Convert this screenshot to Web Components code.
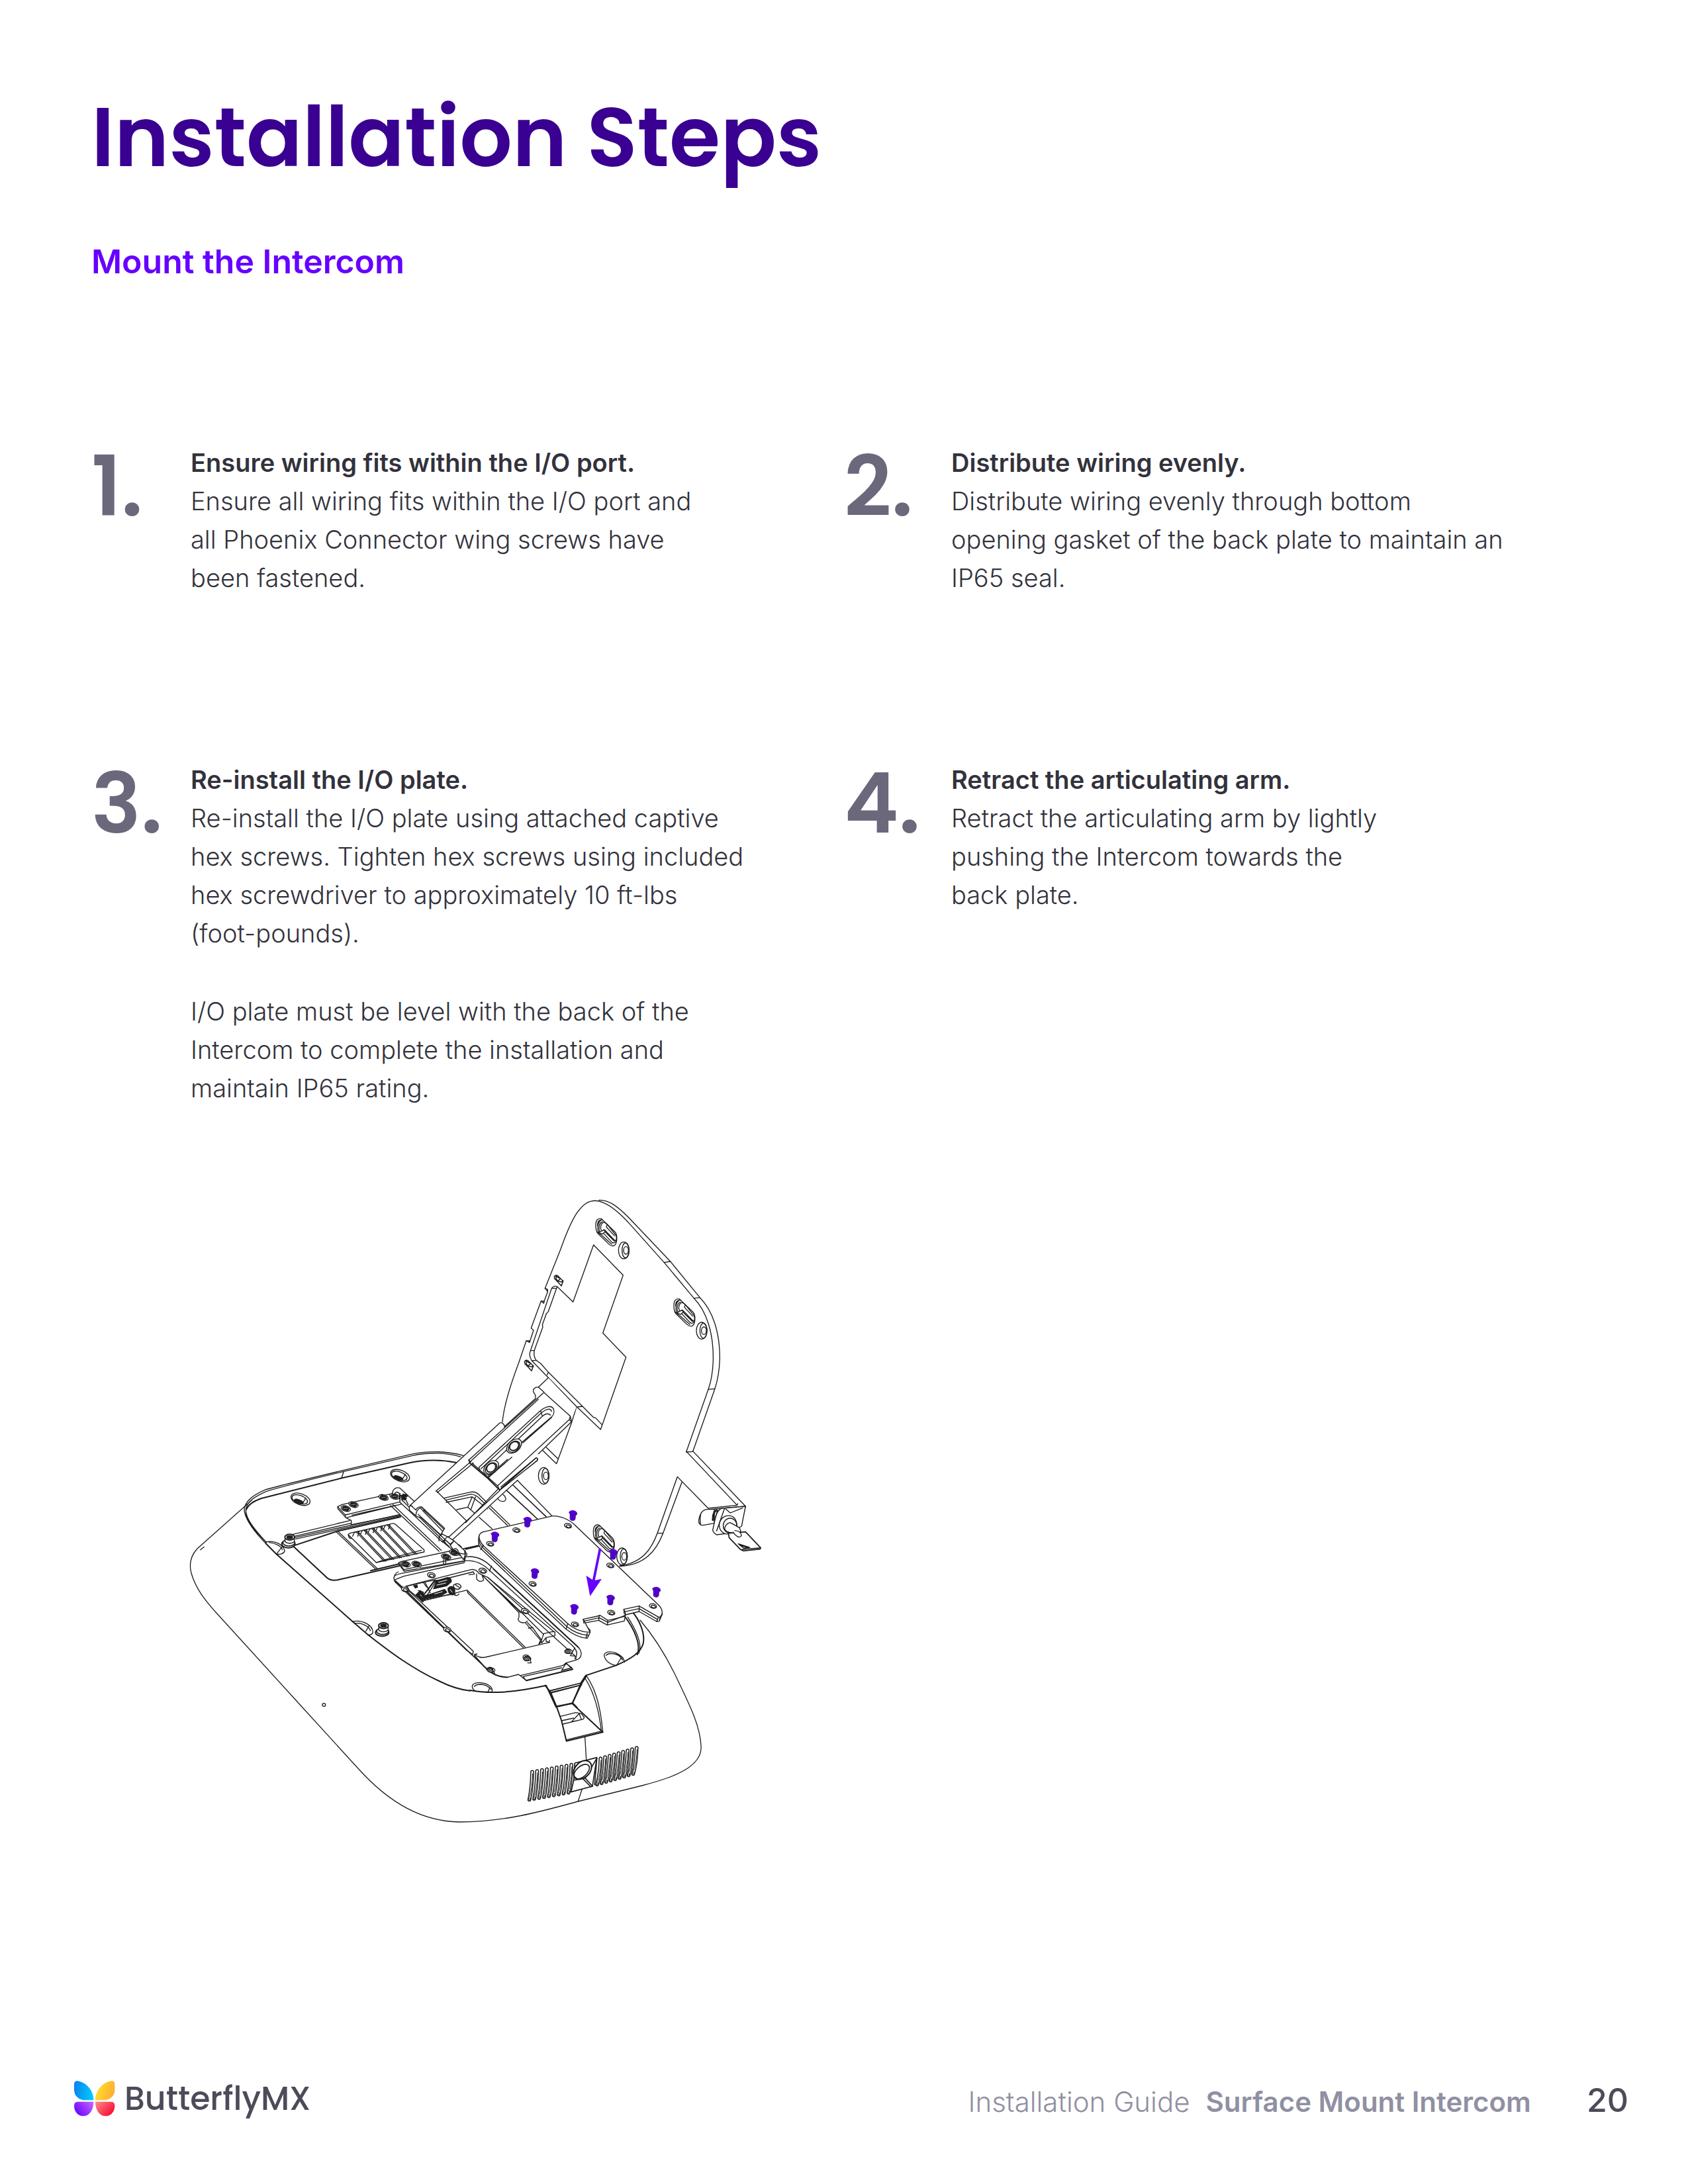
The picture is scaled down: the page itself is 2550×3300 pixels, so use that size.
<!DOCTYPE html>
<html lang="en">
<head>
<meta charset="utf-8">
<title>Installation Steps</title>
<style>
  body { margin: 0; background: #fff; font-family: Poppins, Inter, "Liberation Sans", sans-serif; color: #32323c; }
</style>
</head>
<body>
<guide-page>
  <page-title>
    <span slot="title">Installation Steps</span>
    <span slot="section">Mount the Intercom</span>
  </page-title>
  <step-grid>
    <guide-step number="1.">
      <span slot="heading">Ensure wiring fits within the I/O port.</span>
      <p>Ensure all wiring fits within the I/O port and<br>all Phoenix Connector wing screws have<br>been fastened.</p>
    </guide-step>
    <guide-step number="2." class="wide">
      <span slot="heading">Distribute wiring evenly.</span>
      <p>Distribute wiring evenly through bottom<br>opening gasket of the back plate to maintain an<br>IP65 seal.</p>
    </guide-step>
    <guide-step number="3.">
      <span slot="heading">Re-install the I/O plate.</span>
      <p>Re-install the I/O plate using attached captive<br>hex screws. Tighten hex screws using included<br>hex screwdriver to approximately 10 ft-lbs<br>(foot-pounds).</p>
      <p>I/O plate must be level with the back of the<br>Intercom to complete the installation and<br>maintain IP65 rating.</p>
    </guide-step>
    <guide-step number="4." class="wide">
      <span slot="heading">Retract the articulating arm.</span>
      <p>Retract the articulating arm by lightly<br>pushing the Intercom towards the<br>back plate.</p>
    </guide-step>
  </step-grid>
  <intercom-drawing></intercom-drawing>
  <page-footer slot="footer" page="20">
    <span slot="guide">Installation Guide</span>
    <span slot="product">Surface Mount Intercom</span>
  </page-footer>
</guide-page>

<script>
class Base extends HTMLElement {
  constructor() {
    super();
    this.attachShadow({ mode: "open" }).innerHTML = this.render();
  }
}

customElements.define("guide-page", class extends Base {
  render() {
    return `<style>
      :host { display: flex; flex-direction: column; min-height: 100vh; box-sizing: border-box; padding: 133px 0 92px; }
      main { padding: 0 138px; }
    </style>
    <main><slot></slot></main>
    <slot name="footer"></slot>`;
  }
});

customElements.define("page-title", class extends Base {
  render() {
    return `<style>
      :host { display: block; }
      h1 { margin: 0; font-weight: 600; font-size: 125px; line-height: 150px; color: #390091; }
      h2 { margin: 78px 0 0; font-family: Inter, sans-serif; font-weight: 600; font-size: 50px; line-height: 68px; color: #6600ff; }
    </style>
    <h1><slot name="title"></slot></h1>
    <h2><slot name="section"></slot></h2>`;
  }
});

customElements.define("step-grid", class extends Base {
  render() {
    return `<style>
      :host { display: grid; grid-template-columns: 1fr 1fr; row-gap: 247px; margin-top: 241px; }
    </style><slot></slot>`;
  }
});

customElements.define("guide-step", class extends HTMLElement {
  connectedCallback() {
    if (this.shadowRoot) return;
    this.attachShadow({ mode: "open" }).innerHTML = `<style>
      :host { display: flex; --number-width: 150px; }
      :host(.wide) { --number-width: 162px; }
      .number { flex: 0 0 var(--number-width); font-size: 125px; line-height: 132px; font-weight: 600; color: #6b687c; }
      .text { font-family: Inter, sans-serif; font-size: 38px; line-height: 58px; font-weight: 300; }
      h3 { margin: 0; font: inherit; font-weight: 600; }
      ::slotted(p) { margin: 0 0 60px; }
      ::slotted(p:last-child) { margin-bottom: 0; }
    </style>
    <div class="number">${this.getAttribute("number")}</div>
    <div class="text"><h3><slot name="heading"></slot></h3><slot></slot></div>`;
  }
});

customElements.define("page-footer", class extends HTMLElement {
  connectedCallback() {
    if (this.shadowRoot) return;
    this.attachShadow({ mode: "open" }).innerHTML = `<style>
      :host { display: flex; align-items: flex-start; justify-content: space-between; margin-top: auto; padding: 0 90px 0 112px; line-height: 64px; }
      .right { display: flex; align-items: baseline; font-family: Inter, sans-serif; font-size: 42px; color: #9090a2; }
      .guide { font-weight: 300; margin-right: 24px; }
      .product { font-weight: 600; margin-right: 84px; }
      .page { font-size: 50px; font-weight: 500; color: #4b4b5a; }
    </style>
    <brand-logo></brand-logo>
    <div class="right">
      <span class="guide"><slot name="guide"></slot></span>
      <span class="product"><slot name="product"></slot></span>
      <span class="page">${this.getAttribute("page")}</span>
    </div>`;
  }
});

customElements.define("brand-logo", class extends Base {
  render() {
    return `<style>
      :host { display: flex; align-items: center; gap: 14px; font-size: 49px; line-height: 60px; font-weight: 500; color: #4b4b5a; }
      svg { display: block; width: 62px; height: 54px; }
    </style>
    <svg viewBox="96 137 186 162" aria-hidden="true">
      <defs>
        <linearGradient id="b" x1="0" y1="0.4" x2="1" y2="0.6"><stop offset="0" stop-color="#0a84f0"/><stop offset="1" stop-color="#00ccff"/></linearGradient>
        <linearGradient id="y" x1="0" y1="0.4" x2="1" y2="0.7"><stop offset="0" stop-color="#ffe02c"/><stop offset="1" stop-color="#ffaa30"/></linearGradient>
        <linearGradient id="p" x1="0" y1="0.8" x2="1" y2="0.2"><stop offset="0" stop-color="#6600ff"/><stop offset="1" stop-color="#c060ff"/></linearGradient>
        <linearGradient id="r" x1="0" y1="0.1" x2="1" y2="0.8"><stop offset="0" stop-color="#ff8585"/><stop offset="1" stop-color="#f5052f"/></linearGradient>
      </defs>
      <path fill="url(#b)" d="M96 152Q96 137 112 138C150 144 184 180 184 225H148C118 225 96 206 96 178Z"/>
      <path fill="url(#y)" d="M280 152Q280 137 264 138C226 144 192 180 192 225H228C258 225 280 206 280 178Z"/>
      <path fill="url(#p)" d="M184 232H112Q96 232 96 250C96 278 114 297 138 297C166 297 184 268 184 232Z"/>
      <path fill="url(#r)" d="M192 232H264Q280 232 280 250C280 278 262 297 238 297C210 297 192 268 192 232Z"/>
    </svg>
    <span>ButterflyMX</span>`;
  }
});

/* Line drawing of the intercom on its articulating arm. Each group has its own local scale. */
customElements.define("intercom-drawing", class extends Base {
  render() {
    const at = (points, draw) => points.map(p => draw(...p)).join("");
    const hole = (x, y, r = 16) => `<g transform="translate(${x} ${y}) rotate(15)"><ellipse rx="${r}" ry="${r * .62}" fill="#fff"/><ellipse cx="2" cy="2" rx="${r * .6}" ry="${r * .34}"/></g>`;
    const darkScrew = (x, y) => `<g transform="translate(${x} ${y}) rotate(18)"><ellipse rx="22" ry="12" fill="#fff"/><ellipse rx="15" ry="8" fill="#222"/><path d="M-8 3L8-3" stroke="#aaa" stroke-width="2"/></g>`;
    const bolt = (x, y) => `<g transform="translate(${x} ${y})"><ellipse cx="6" cy="-1" rx="17" ry="10" fill="#fff"/><circle r="10" cx="4" cy="-3"/><ellipse cx="4" cy="-3" rx="5" ry="4"/></g>`;
    const well = (x, y) => `<g transform="translate(${x} ${y}) rotate(20)"><ellipse rx="45" ry="25"/><ellipse cx="-3" cy="2" rx="37" ry="18"/><ellipse cx="-4" cy="13" rx="21" ry="8" fill="#222"/><path d="M20-14L16 12"/></g>`;
    const thumb = (x, y) => `<g transform="translate(${x} ${y})"><ellipse cx="-3" cy="12" rx="30" ry="17" fill="#fff" stroke-width="6"/><ellipse cx="-1" cy="6" rx="27" ry="15" fill="#fff" stroke-width="5"/><path d="M-18-18V2Q2 16 24 2V-18" fill="#fff"/><ellipse cx="3" cy="-19" rx="22" ry="13" fill="#fff" stroke-width="6"/><ellipse cx="3" cy="-19" rx="13" ry="7" fill="#222"/></g>`;
    const slot = (x, y) => `<g transform="translate(${x} ${y})"><path fill="#fff" d="M540 215C540 190 550 181 566 185L628 245C640 262 637 300 622 307C610 310 602 304 592 292L550 252C542 243 540 230 540 215Z"/><path d="M548 216C548 196 556 188 570 190M545 243L570 262L612 300M552 246C546 225 550 200 562 193M558 245C551 225 556 203 570 198M566 240C558 225 562 206 578 200L592 210M553 247L578 234L582 244L570 254ZM566 240L580 235L628 285C635 282 636 268 630 258L592 210L588 222L625 262M582 244L624 286M575 250L612 290C620 298 632 293 634 282"/></g>`;
    const disc = (x, y) => `<g transform="translate(${x} ${y})"><ellipse rx="24" ry="38" fill="#fff"/><ellipse cx="8" cy="0" rx="16" ry="34"/><ellipse cx="10" cy="0" rx="11" ry="17"/></g>`;
    const clip = (x, y) => `<path transform="translate(${x} ${y})" d="M-20-18Q-14-28-4-22L20 2L12 24L-6 4L-18-8ZM-12-22V-8L-4 2L8-10M-4 2L14 6L20 0M-12-20L2-12" stroke-width="4.5"/>`;
    const roller = (x, y) => `<g transform="translate(${x} ${y}) rotate(-42)"><ellipse rx="39" ry="26" fill="#fff"/><ellipse cx="-2" cy="2" rx="30" ry="21"/><ellipse rx="23" ry="18" stroke-width="6"/></g>`;
    const screw = (x, y) => `<g transform="translate(${x} ${y})"><path fill="#5200cc" stroke="#3c0099" stroke-width="2" d="M-12-2V24Q-8 30 2 30Q10 29 11 22L13 0Z"/><path fill="#5a00e0" stroke="#3c0099" stroke-width="2" d="M-16-8Q-12-17 2-16Q14-14 18-6V3Q8 9-3 5Q-14 2-16-8Z"/><path stroke="#3c0099" stroke-width="2" d="M-14-6Q0 4 17-2"/></g>`;
    const rib = (x, y, dx, h) => {
      const d = `M${x} ${y}Q${x - 2} ${y + h * .6} ${x - dx} ${y + h}`;
      return `<path d="${d}" stroke-width="17"/><path d="${d}" stroke="#fff" stroke-width="8"/><path d="M${x + 2} ${y + 8}Q${x - 1} ${y + h * .6} ${x - dx + 2} ${y + h - 14}" stroke-width="3"/><ellipse cx="${x - dx}" cy="${y + h - 4}" rx="4" ry="6" stroke-width="3"/>`;
    };
    let ribs = "";
    for (let i = 0; i < 9; i++) {
      ribs += rib(372 + 22.2 * i, 712 - 4 * i, 13, 126);
      ribs += rib(682 + 20.4 * i, 651 - 6 * i, 16, 118);
    }
    let slats = "";
    for (let i = 0; i < 5; i++) {
      const x = 804 + 35 * i, y = 464 - 8 * i;
      slats += `M${x} ${y}l127 134M${x + 8} ${y}l127 133M${x - 16} ${y + 20}l8-18l22-4l-7 22`;
    }

    return `<style>
      :host { display: block; margin: 127px 0 0 142px; }
      svg { display: block; width: 880px; height: 960px; max-width: 100%; }
    </style>
    <svg viewBox="280 1800 880 960" role="img" aria-label="Intercom with captive hex screws and I/O plate" fill="none" stroke="#1c1c1c" stroke-width="1.3" stroke-linejoin="round" stroke-linecap="round">
      <!-- housing outline -->
      <path d="M380 2267L298 2340C287 2352 286 2366 289 2377C296 2402 312 2420 325 2435L457 2580L540 2671C590 2727 640 2752 694 2753C760 2753 815 2738 873 2722L970 2698C1000 2690 1022 2683 1040 2671C1055 2660 1060 2650 1059 2637C1057 2605 1040 2573 1023 2537C1008 2505 990 2475 967 2448"/>

      <!-- left side of the housing: rim, battery cover, vent -->
      <g transform="translate(270 2160) scale(.33333)" stroke-width="4">
        <path d="M395 517C330 450 300 400 297 365C298 325 335 297 395 272C450 256 600 220 745 185L1050 113C1130 95 1220 98 1290 118M398 512C340 450 305 405 304 365C306 330 340 305 398 280C470 258 600 226 745 191L1060 118C1130 102 1220 104 1278 124M748 190L738 220M98 545L115 532M306 362C298 385 315 430 398 512"/>
        <path stroke-width="6" d="M306 362C318 335 345 322 375 312L740 220L1040 152C1120 135 1200 138 1258 150M395 517L445 567L790 872L860 932C960 1010 1060 1085 1180 1140C1230 1165 1280 1180 1320 1184"/>
        <circle cx="658" cy="1248" r="7"/>
        ${at([[1003, 209], [552, 316]], well)}
        <path d="M395 510C430 500 475 520 480 550C478 562 460 567 445 565M410 512C440 515 465 530 470 545M468 532L445 562M790 870C830 862 880 885 880 920C875 930 865 932 858 930M800 878C835 875 865 895 868 912M862 890L848 915"/>
        <path d="M505 478L775 413M520 485L780 425M524 490L1000 386M530 496L1005 391M715 465L895 635M722 462L902 632M960 345L1180 552M970 340L1190 548M1010 330L1225 530M1020 326L1235 525"/>
        <path stroke-width="6" d="M520 527L715 462L1005 396M522 532L672 672C685 684 700 685 720 682L1000 618"/>
        <path d="M768 476L895 603L1112 555V545L985 432Q972 420 955 430L775 470ZM895 603L935 590L1100 547M768 476Q770 494 782 494"/>
        <path d="${slats}"/>
        <path fill="#fff" d="M720 350L740 340L970 290L1015 325L755 387Z"/>
        <path d="M720 350L722 360L758 400L782 412V430M755 387V398M758 400L1010 338M785 388L985 343M1000 388L780 432"/>
        ${at([[757, 358], [792, 340], [928, 308], [978, 303]], darkScrew)}
        <path fill="#fff" d="M968 290C970 265 990 260 1003 266L1230 475L1195 510L1003 330L1000 290Q985 275 975 295Z"/>
        <path d="M1003 290V320M1010 318L1210 515M1020 300L1040 340M1050 365Q1050 345 1075 340M1078 390Q1070 360 1095 352"/>
        <path d="M1008 300L1030 296M1010 308L1034 302M1012 316L1030 312M1018 294L1024 318" stroke-width="8"/>
        ${at([[500, 507], [925, 908]], thumb)}
      </g>

      <!-- wall plate -->
      <g transform="translate(720 1780) scale(.33333)" stroke-width="4">
        <path d="M117 1105C125 1020 160 920 190 840L225 738L240 745L258 690L247 680L292 558L303 567L322 515L310 500L380 325C410 240 440 170 470 139C500 100 540 95 575 112C620 130 660 170 700 215L850 383L985 545C1040 600 1075 700 1072 830C1070 880 1062 925 1050 958L950 1242"/>
        <path d="M555 100C600 98 640 130 690 180L878 378L1012 542C1070 600 1103 700 1102 820C1100 880 1090 925 1080 955L980 1240M850 383L878 378M985 545L1012 542M1050 958L1080 955M950 1242L980 1240"/>
        <path d="M225 738L240 738V745M292 558L305 558V567M310 500L322 505V515"/>
        <path d="M365 492L437 562L530 303L664 440L572 703L677 812L562 1140L455 1038L250 828C238 810 238 795 245 780L340 500Q350 486 365 492L325 605L316 615L298 665L300 675L262 780C258 800 262 815 270 826L290 840L325 880L480 1035L530 1085L540 1088L568 1118M455 1038L480 1035M245 782H262M250 828L270 826M342 500H360M325 880L320 892"/>
        <path d="M452 1040L430 1110L362 1295L300 1235M315 1220L368 1272"/>
        ${at([[372, 465], [237, 850]], clip)}
        ${at([[0, 0], [354, 364], [-11, 1388]], slot)}
        ${at([[667, 328], [1020, 692], [659, 1715], [304, 1350]], disc)}
        <path fill="#fff" stroke="none" d="M325 905L280 948L265 998L305 972L430 1090L452 1040Z"/>
        <path d="M325 905L280 948C265 945 253 958 258 970C262 980 272 985 265 998M280 948L305 970"/>
      </g>

      <!-- wall plate tail and key lock -->
      <g transform="translate(640 2180) scale(.34439 .33333)" stroke-width="4">
        <path d="M1153 40L1375 283L1248 297L1113 154L1025 410C1000 480 960 545 860 557M1180 37L1412 288L1388 380M1133 178L1050 410C1020 490 970 555 860 560M1025 410L1050 410M1375 283L1378 276M1248 303L1412 288"/>
        <path fill="#fff" d="M1248 302C1225 300 1212 320 1207 350C1205 365 1212 375 1225 374L1275 365V302ZM1216 322Q1210 345 1215 370"/>
        <path stroke-width="8" d="M1285 305Q1265 320 1270 350M1275 312L1268 350M1290 310L1278 350"/>
        <path fill="#fff" d="M1310 297Q1290 300 1280 340L1268 395Q1268 405 1285 417L1340 410L1395 378L1400 350L1412 288Z"/>
        <path d="M1320 297L1285 400M1325 300L1345 318L1400 295"/>
        <ellipse cx="1335" cy="372" rx="38" ry="42" fill="#fff" transform="rotate(15 1335 372)"/>
        <ellipse cx="1344" cy="376" rx="30" ry="34"/>
        <path fill="#fff" d="M1345 362L1385 385Q1396 410 1390 425L1350 408Q1325 405 1320 390Q1325 365 1345 362Z"/>
        <path fill="#fff" stroke-width="5" d="M1337 410L1412 404L1478 476L1476 482L1402 490L1390 484L1340 430Z"/>
        <path d="M1395 484L1478 476M1380 458L1430 475L1405 478ZM1385 462L1418 474" stroke-width="4.5"/>
        <path fill="#fff" d="M1365 398Q1390 400 1394 418Q1392 430 1378 426Q1362 415 1358 405"/>
      </g>

      <!-- I/O pocket -->
      <g transform="translate(560 2300) scale(.33333)" stroke-width="4">
        <path stroke-width="6" d="M430 122L490 108M0 220L127 190"/>
        <path d="M125 225C103 235 100 262 115 275L435 580L515 655C550 690 580 703 620 703L670 690L705 718L915 667L885 638L930 625C957 618 962 590 940 565L545 200C510 165 470 152 430 157L425 178M112 260L150 245L425 183M105 250Q108 238 140 232L430 175C470 172 510 190 540 220L915 560C935 580 940 600 925 618M548 198L538 222M545 200L940 565M555 212L945 572"/>
        <path stroke-width="6" d="M110 265L165 315L435 580M470 605L515 655C550 690 580 703 620 703M705 718L915 667"/>
        <path d="M160 290L455 215Q478 212 490 232M165 300L465 225L470 235L445 238M480 235V252A18 16 0 0 0 512 262L505 240M490 232L530 250L835 500M505 240L600 335L672 410V430A20 15 0 0 0 710 448M600 335Q650 380 680 410M510 245L700 425L785 510M710 455L735 480L775 535M700 455L770 535L762 552M785 510L780 530L765 552M715 480L735 478"/>
        <path fill="#fff" d="M785 505L820 497H835V515L795 523L775 548Q770 540 785 505ZM795 523V540L810 545V535"/>
        <path d="M160 290Q162 310 180 318L465 585L462 600L435 580M240 355L437 308L700 567M440 320L692 569M437 308L440 320M165 300L240 360M470 600C490 612 500 616 520 612L810 545M470 600L482 597"/>
        <path d="M680 695L870 650L885 638M705 718L690 700L865 660M865 672L885 640L912 660L865 672"/>
        <path d="M530 250L925 605M905 605L930 608V625M925 570L905 605"/>
        <path fill="#fff" d="M165 290L260 268L295 262L225 350L175 310ZM240 275L250 290L262 300M215 310L240 318"/>
        <path fill="#222" d="M300 265L350 250Q368 255 365 270L345 288L285 302ZM275 325L335 305L345 318L320 332L240 350L235 335ZM350 300Q365 285 378 298Q388 315 370 330Q350 325 350 300ZM195 288L210 285L212 295L202 298ZM225 310L240 325L235 362L205 330Z"/>
        <path stroke="#fff" stroke-width="3" d="M308 272L345 262M300 285L340 276M290 325L325 315M360 305L370 318M225 330L235 340"/>
        <path d="M300 262L240 355M290 262L228 345M240 355L340 332L385 325M375 285Q400 270 410 292Q400 310 385 302Q375 298 375 285M385 285L402 296M370 325Q390 340 400 325M245 270L270 320"/>
        ${at([[275, 240, 18], [508, 220, 18], [155, 305, 16], [347, 487, 17], [700, 403, 18]], hole)}
        ${at([[890, 587], [703, 620], [540, 672]], bolt)}
        <path d="M690 615Q690 600 705 602Q722 605 722 620L727 638H712M525 670Q530 655 545 658L562 685"/>
        <path fill="#fff" d="M127 183L140 178L410 120L430 135L425 158L150 215Z"/>
        <path d="M127 183V190L152 222L425 175V158M150 215V222M225 205L228 215M330 170V188M340 165V186"/>
        ${at([[158, 190], [208, 190], [342, 157], [378, 138], [415, 142]], darkScrew)}
        <path fill="#fff" d="M370 120L385 100Q405 98 415 122L430 132L420 150L395 140Q385 120 370 130Z"/>
        <path stroke-width="6" d="M450 762C500 772 560 772 600 770C680 765 740 752 795 740L840 838L915 820M975 695L1110 650C1180 620 1225 590 1235 550C1245 500 1215 440 1185 405M1150 425C1200 490 1225 560 1208 600M975 695L955 725L915 820L935 840"/>
        <path d="M808 765L950 730M815 775L955 738M1165 430C1210 500 1230 560 1215 595"/>
        <path d="M550 768Q555 745 520 732C490 722 460 728 460 745Q462 758 475 766M545 758Q530 738 500 735Q475 735 470 745M540 750L532 768M1150 635Q1150 610 1110 592C1080 582 1058 590 1058 605C1062 625 1080 645 1115 650M1142 625Q1130 602 1105 597Q1075 592 1067 604M1135 615L1115 648"/>
      </g>

      <!-- front face: pull tab, camera, speaker ribs -->
      <g transform="translate(680 2440) scale(.33333)" stroke-width="4">
        <path stroke-width="6" d="M430 320L455 350L482 415L505 480L527 572L692 532L553 402L482 415M553 402L597 310L618 277"/>
        <path d="M618 277C655 330 680 400 692 532M608 282C640 330 672 410 685 525M450 345L597 308M452 352L597 317M530 566L690 526M500 460L570 443L595 448L608 465L603 473L512 495M505 480L560 468M550 485L585 448L595 475Z"/>
        <path d="M611 553L617 655M597 793L580 845"/>
        ${ribs}
        <path fill="#fff" stroke-width="5" d="M565 672L665 647L645 777L548 803L560 750Z"/>
        <path stroke-width="5" d="M560 750L612 740L645 777M604 745L638 780M612 740L665 650L655 770"/>
        <ellipse cx="600" cy="703" rx="48" ry="34" transform="rotate(-48 600 703)" fill="#fff" stroke-width="6"/>
        <ellipse cx="596" cy="711" rx="42" ry="24" transform="rotate(-42 596 711)" stroke-width="5"/>
      </g>

      <!-- articulating arm -->
      <g transform="translate(600 2080) scale(.33333)" stroke-width="4">
        <path fill="#fff" stroke="none" d="M65 580L470 208L487 225L620 100L665 70L790 190L785 215L500 480L232 735L90 610Z"/>
        <path d="M60 583L465 210Q478 204 488 226M175 520L335 385M182 526L345 392M178 518L315 655L305 663M325 378L665 72L785 180M485 228L628 98M330 386L640 103M785 180L790 205L640 350M780 195L455 495M785 180L780 195L790 205"/>
        <path stroke-width="6" d="M325 378L330 392L368 425L412 462L465 515"/>
        <path d="M340 392L368 418L455 495L465 515L635 380Q640 372 630 368L470 508M630 368L470 500"/>
        <path d="M370 412L645 158C665 140 695 126 708 145C715 165 705 180 695 187L560 302M380 418L655 163C675 148 695 140 700 158M398 425L658 180Q680 160 695 175M650 155L658 180M370 412L375 425M412 460L445 430L520 365M410 455L500 375M570 300L700 185"/>
        ${at([[530, 315], [426, 413]], roller)}
        <path d="M215 550L335 523C350 522 365 528 375 540L510 672M220 560L335 533Q355 535 370 550L500 675M222 570L340 545L320 592L270 603M355 545L335 600M340 545L410 600M320 592L430 690M480 535C493 545 497 560 485 565C470 568 460 560 455 552"/>
        <path stroke-width="5" d="M495 515L635 645M525 492L675 635"/>
        <path d="M545 470L700 630M300 780L370 765"/>
        <path fill="#fff" stroke="none" d="M218 742L465 515L635 375L520 488L245 762Z"/>
        <path d="M218 742L465 517M310 662L455 512M245 745L545 470M465 515L635 380Q640 372 630 368L470 508"/>
        <path fill="#fff" d="M60 582Q50 595 58 608L90 635L110 640L240 760L258 745L232 728L200 712L215 688L110 590Q88 592 85 605Z"/>
        <path d="M85 630Q85 605 105 595L120 612L205 700M120 605L212 692M110 592L125 605M190 745Q185 722 205 712M215 750Q212 732 235 725M95 625L200 720"/>
        <path fill="#fff" d="M240 765L258 745L305 788L308 810L300 830L280 800Q270 770 255 785Z"/>
        <path d="M205 748L250 785M255 795L305 805"/>
      </g>

      <!-- I/O plate, screws and arrow -->
      <g transform="translate(640 2180) scale(.34439 .33333)" stroke-width="4">
        <path fill="#fff" d="M242 425C238 460 243 472 255 484L625 845C660 872 690 885 718 886L730 860L730 850L700 818L768 805L805 826L880 808L885 780L945 765L1022 810L1034 808L1047 775L900 640L262 404Z"/>
        <path fill="#fff" d="M262 404L565 332C600 330 640 350 660 370L1030 735C1045 750 1048 765 1045 778L1038 790H1030L945 740L878 755L885 772L882 787L808 805L775 783L700 800L730 858C690 860 660 845 632 820L260 465C235 430 240 410 262 404Z"/>
        <path d="M242 440Q246 462 258 474L628 833C660 860 690 870 722 873M1024 800L945 752L880 766M1034 800L1045 778M885 782L808 814L770 793L702 809M700 800L703 818M770 782L768 805M808 805L806 826M878 755L880 775M945 740L945 765M632 820L625 845M262 464L250 485M1030 790L1022 810M718 862L712 886"/>
        ${at([[633, 376], [407, 396], [292, 458], [819, 556], [478, 640], [1006, 740], [823, 770], [664, 823]], hole)}
        ${at([[654, 323], [455, 353], [312, 420], [831, 499], [487, 586], [1020, 670], [819, 706], [660, 748]], screw)}
        <path stroke="#6600ff" stroke-width="11" stroke-linecap="butt" d="M774 480L744 632"/>
        <path fill="#6600ff" stroke="none" d="M713 602L746 625L781 617L730 695Z"/>
      </g>
    </svg>`;
  }
});
</script>
</body>
</html>
